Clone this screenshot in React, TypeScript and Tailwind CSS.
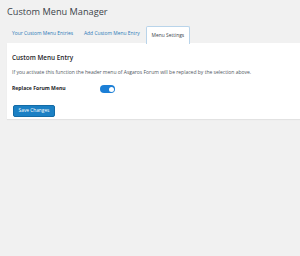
import React, { useState } from 'react';

export default function App() {
  const [tab, setTab] = useState(2);
  const [replace, setReplace] = useState(true);
  const tabs = ['Your Custom Menu Entries', 'Add Custom Menu Entry', 'Menu Settings'];

  return (
    <div className="min-h-[256px] bg-[#f1f1f1] pl-[7px] font-['Open_Sans',sans-serif]">
      <h1 className="pt-[4px] h-[25px] text-[9.2px] leading-[15px] text-[#3c434a]">Custom Menu Manager</h1>

      {/* Tabs */}
      <div className="flex items-end h-[18px]">
        {tabs.map((t, i) =>
          i === tab ? (
            <button
              key={t}
              className="h-[18px] px-[5px] text-[4.9px] text-[#3c434a] bg-white border border-b-0 border-[#b9d4ea] rounded-t-[2px] -mb-px relative"
            >
              {t}
            </button>
          ) : (
            <button
              key={t}
              onClick={() => setTab(i)}
              className="h-[18px] px-[5px] mr-[1px] text-[4.9px] text-[#2c7ab8]"
            >
              {t}
            </button>
          )
        )}
      </div>

      {/* Panel */}
      <div className="bg-white h-[76px] pl-[5px] pt-[10px] shadow-[0_1px_1px_rgba(0,0,0,0.06)]">
        <h2 className="h-[10px] text-[6.4px] leading-[10px] font-semibold text-[#1d2327]">Custom Menu Entry</h2>
        <p className="mt-[5px] h-[8px] text-[5px] leading-[8px] text-[#50575e]">
          If you activate this function the header menu of Asgaros Forum will be replaced by the selection above.
        </p>
        <div className="mt-[8px] flex items-center h-[10px]">
          <span className="w-[88px] text-[5.1px] font-bold text-[#1d2327]">Replace Forum Menu</span>
          <button
            onClick={() => setReplace(!replace)}
            className={`w-[15px] h-[8px] rounded-full flex items-center px-[1.5px] ${replace ? 'bg-[#1c7fd6] justify-end' : 'bg-[#c3c4c7] justify-start'}`}
          >
            <span className="w-[5px] h-[5px] rounded-full bg-white" />
          </button>
        </div>
        <button className="mt-[1px] ml-[1px] w-[42px] h-[12px] rounded-[2px] bg-[#1b80c4] border border-[#136ba6] text-white text-[4.8px]">
          Save Changes
        </button>
      </div>
    </div>
  );
}
